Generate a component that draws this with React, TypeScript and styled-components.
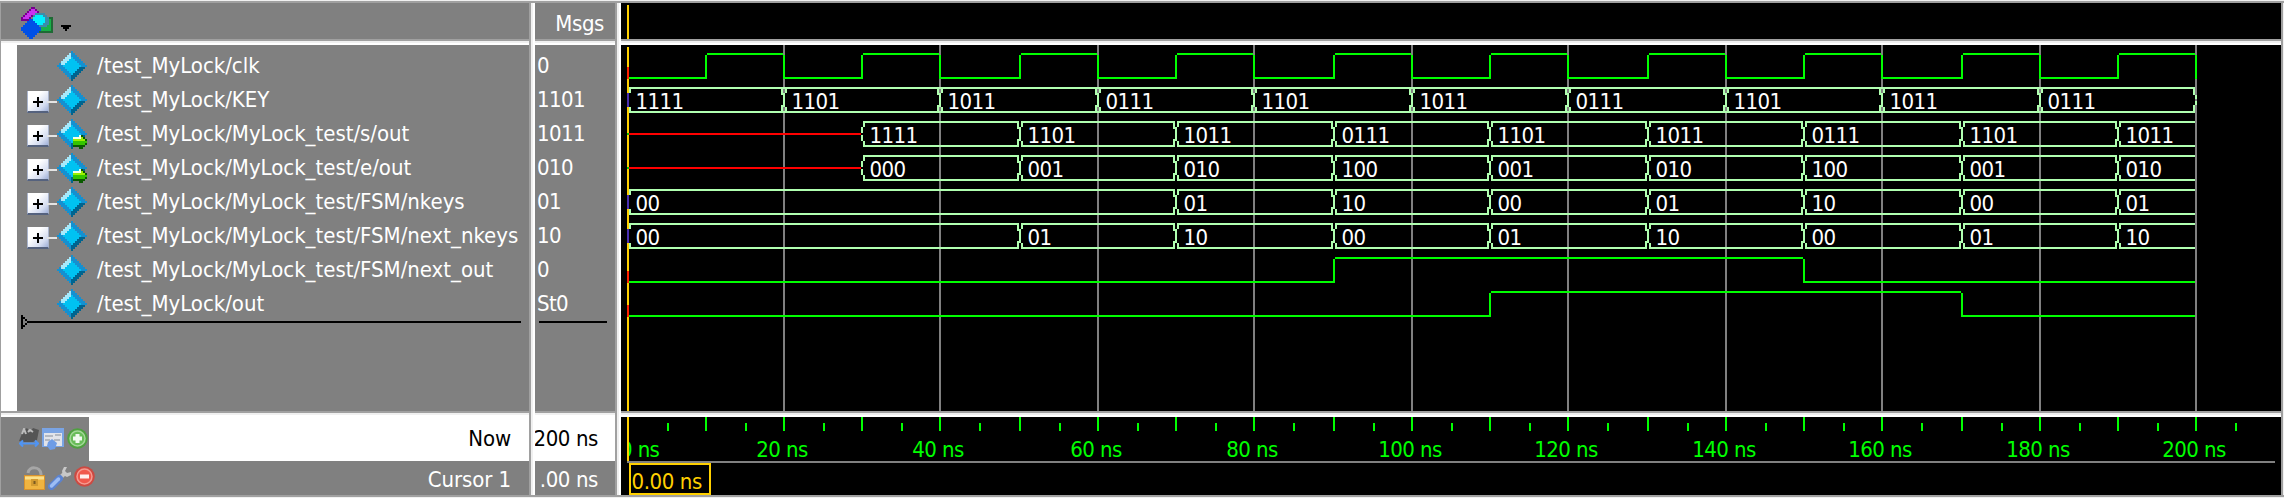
import React from "react";
import styled, { createGlobalStyle } from "styled-components";

const Global = createGlobalStyle`
  body { margin: 0; background: #f0f0f0; overflow: hidden; }
  * { box-sizing: border-box; }
  svg { display: block; flex: none; }
`;

const FONT = '"DejaVu Sans Condensed", "DejaVu Sans", sans-serif';
const GREY = "#808080";
const LIME = "#00ff00";
const MINT = "#b0ffb0";
const GOLD = "#ffd000";

const Window = styled.div`
  width: 2284px;
  height: 498px;
  display: flex;
  flex-direction: column;
  background: #f0f0f0;
  font-family: ${FONT};
  font-size: 22px;
  color: #fff;
  white-space: pre;
`;
const TopEdge = styled.div`
  height: 3px;
  border-bottom: 2px solid #a0a0a0;
`;
const BottomEdge = styled.div`
  height: 3px;
  border-top: 2px solid #a0a0a0;
`;
const Panes = styled.div`
  display: flex;
  height: 492px;
  border-left: 1px solid #a0a0a0;
  border-right: 1px solid #f0f0f0;
`;
const Pane = styled.div<{ $width: number; $bg?: string }>`
  width: ${(p) => p.$width}px;
  flex: none;
  display: flex;
  flex-direction: column;
  background: ${(p) => p.$bg ?? GREY};
  overflow: hidden;
`;
const VSash = styled.div`
  width: 6px;
  flex: none;
  background: linear-gradient(90deg, #a0a0a0 2px, #f0f0f0 2px 4px, #fff 4px);
`;
const HSash = styled.div`
  height: 6px;
  flex: none;
  background: linear-gradient(180deg, #a0a0a0 2px, #f0f0f0 2px 4px, #fff 4px);
`;
const RightEdge = styled.div`
  width: 2px;
  background: #a0a0a0;
`;
const Header = styled.div<{ $end?: boolean }>`
  height: 36px;
  flex: none;
  display: flex;
  justify-content: ${(p) => (p.$end ? "flex-end" : "flex-start")};
  padding: ${(p) => (p.$end ? "0 11px 0 0" : "4px 0 0 20px")};
  line-height: 41px;
`;
const HeaderLabel = styled.span`
  letter-spacing: -0.4px;
`;
const Caret = styled.svg`
  margin: 18px 0 0 8px;
`;
const Body = styled.div<{ $gutter?: boolean }>`
  height: 366px;
  flex: none;
  padding-top: 4px;
  border-left: ${(p) => (p.$gutter ? "16px solid #fff" : "0")};
`;
const SignalRow = styled.div`
  height: 34px;
  display: flex;
  align-items: center;
`;
const TreeSlot = styled.div`
  width: 40px;
  height: 34px;
  display: flex;
  align-items: center;
  padding: 4px 0 0 10px;
`;
const PlusBox = styled.div`
  width: 22px;
  height: 22px;
  flex: none;
  background: linear-gradient(135deg, #fff 35%, #d4dcf0 75%, #9fb0d8);
  border: solid #a9b4cc;
  border-width: 0 1px 2px 1px;
  border-bottom-color: #55627e;
`;
const Link = styled.div`
  width: 10px;
  height: 2px;
  background: #e4e4e4;
  margin-left: -2px;
`;
const SignalName = styled.span`
  margin-left: 8px;
  line-height: 34px;
  letter-spacing: -0.02px;
`;
const ValueRow = styled.div`
  height: 34px;
  line-height: 34px;
  padding-left: 2px;
  letter-spacing: -0.6px;
`;
const InsertBar = styled.div`
  display: flex;
  align-items: center;
  height: 14px;
  margin: -6px 0 0 4px;
`;
const InsertLine = styled.div<{ $width: number }>`
  width: ${(p) => p.$width}px;
  height: 2px;
  background: #000;
`;
const FootRow = styled.div<{ $h: number; $light?: boolean }>`
  height: ${(p) => p.$h}px;
  line-height: ${(p) => (p.$light ? p.$h : p.$h + 3)}px;
  flex: none;
  display: flex;
  justify-content: space-between;
  background: ${(p) => (p.$light ? "#fff" : GREY)};
  color: ${(p) => (p.$light ? "#000" : "#fff")};
  letter-spacing: -0.1px;
`;
const FootIcons = styled.div<{ $left: number; $top: number; $gap: number }>`
  width: 88px;
  height: 100%;
  background: ${GREY};
  padding: ${(p) => p.$top}px 0 0 ${(p) => p.$left}px;
  display: flex;
  gap: ${(p) => p.$gap}px;
`;
const FootLabel = styled.span`
  padding-right: 18px;
`;
const FootValue = styled.div<{ $h: number; $light?: boolean }>`
  height: ${(p) => p.$h}px;
  line-height: ${(p) => (p.$light ? p.$h : p.$h + 3)}px;
  flex: none;
  display: flex;
  justify-content: flex-end;
  padding-right: 17px;
  background: ${(p) => (p.$light ? "#fff" : GREY)};
  color: ${(p) => (p.$light ? "#000" : "#fff")};
  letter-spacing: -0.4px;
`;
const Plot = styled.svg`
  shape-rendering: crispEdges;
  font-family: ${FONT};
  font-size: 22px;
`;

/* ---------- icons ---------- */

const facet = (x: number, y: number) => {
  if (Math.abs(x) + Math.abs(y) <= 4) return "#00c2f2";
  if (x < 0 && y < 0) return Math.abs(x) + Math.abs(y) === 7 && x < -5 ? "#1590d0" : "#a6e9fb";
  if (x >= 0 && y > 0) return "#00648f";
  return "#1590d0";
};

const Diamond = ({ arrow }: { arrow?: boolean }) => {
  const cells: React.ReactNode[] = [];
  for (let y = -7; y <= 7; y++)
    for (let x = -7; x <= 7; x++)
      if (Math.abs(x) + Math.abs(y) <= 7)
        cells.push(<rect key={`${x},${y}`} x={x + 7} y={y + 7} width="1" height="1" fill={facet(x, y)} />);
  return (
    <svg width="32" height="30" viewBox="0 0 16 15" shapeRendering="crispEdges">
      {cells}
      {arrow && (
        <>
          <path d="M8 9h3v-1h2v1h1v1h1v3h-1v1h-1v1h-2v-1h-3z" fill="#0a5a00" />
          <path d="M8 9h3v-1h1v1h1v1h1v1h1v1h-7z" fill="#9af000" />
          <path d="M8 11h7v1h-1v1h-6z" fill="#35c400" />
          <path d="M8 9h3v-1h1v2h-4z" fill="#f4ffe8" />
        </>
      )}
    </svg>
  );
};

const Expand = () => (
  <>
    <PlusBox>
      <svg width="20" height="22" shapeRendering="crispEdges">
        <path d="M9 6h2v4h4v2h-4v4h-2v-4h-4v-2h4z" fill="#000" />
      </svg>
    </PlusBox>
    <Link />
  </>
);

const Logo = () => (
  <svg width="32" height="32" viewBox="0 0 16 16" shapeRendering="crispEdges">
    <rect x="9" y="5" width="7" height="8" fill="#1f6a35" />
    <rect x="9" y="6" width="6" height="6" fill="#18b048" />
    <path d="M5 0h2v1h1v1h1v3h-4v2h-5v-2h1v-1h1v-1h1v-1h1v-1h1z" fill="#76008c" />
    <path d="M5 1h2v1h1v2h-3v1h-1v1h-3v-1h1v-1h1v-1h1v-1h1z" fill="#c832f0" />
    <path d="M7 3h5v1h1v1h1v4h-1v1h-5v-2h-2v-4h1z" fill="#3c8ca8" />
    <path d="M7 4h4v1h1v3h-1v1h-4v-1h-1v-3h1z" fill="#00f0ff" />
    <path d="M4 6h2v1h1v1h1v1h1v1h1v2h-1v1h-1v1h-1v1h-1v1h-2v-1h-1v-1h-1v-1h-1v-1h-1v-2h1v-1h1v-1h1v-1h1z" fill="#0050e6" />
  </svg>
);

const CursorSpan = () => (
  <svg width="20" height="22" viewBox="0 0 20 22">
    <path d="M0 13 L4 3 L8 0 L11 4 L14 0 L20 2 L18 12 L14 14 L4 14z" fill="#555" />
    <path d="M3 6l2-5 2 5M9 4l2-2 3 2" stroke="#bdbdbd" strokeWidth="2" fill="none" />
    <path d="M2 15.500h16M4 12.500l-3 3 3 3M16 12.500l3 3-3 3" stroke="#4f94f4" strokeWidth="2" fill="none" />
  </svg>
);
const Note = () => (
  <svg width="22" height="22" viewBox="0 0 22 22">
    <rect width="22" height="19" fill="#7aa4e4" />
    <rect x="2" y="5" width="18" height="13" fill="#e2e4ea" />
    <path d="M3 8h8M13 7h6M3 12h5M12 12h6" stroke="#a4a9b4" strokeWidth="1.600" />
    <path d="M6 14l4-3 5 4-2 6-5 1-3-4z" fill="#6e9ce6" />
  </svg>
);
const Disc = ({ kind }: { kind: "add" | "remove" }) => (
  <svg width="21" height="21" viewBox="0 0 21 21">
    <circle cx="10.500" cy="10.500" r="10.300" fill={kind === "add" ? "#4fa040" : "#cc4a42"} />
    <circle cx="10.500" cy="10.500" r="7.500" fill={kind === "add" ? "#68bc58" : "#f0584c"} stroke={kind === "add" ? "#a4d898" : "#f59a90"} strokeWidth="1.500" />
    <path d={kind === "add" ? "M6 10.500h9M10.500 6v9" : "M6 10.500h9"} stroke="#fff" strokeOpacity="0.9" strokeWidth="4" />
  </svg>
);
const Lock = () => (
  <svg width="22" height="24" viewBox="0 0 22 24">
    <path d="M4 7c1-7 12-7 13 1v3" stroke="#a6a6a6" strokeWidth="3" fill="none" />
    <rect x="0.500" y="9.500" width="20" height="14" fill="#f0b440" stroke="#d8922c" />
    <path d="M1 12h19" stroke="#fbe08c" strokeWidth="3" />
    <rect x="7" y="13" width="7" height="7" fill="#d39a30" />
    <rect x="9.500" y="15" width="2" height="3" fill="#7c5a20" />
  </svg>
);
const Wrench = () => (
  <svg width="24" height="24" viewBox="0 0 24 24">
    <path d="M11 13l6-6" stroke="#c4c4c4" strokeWidth="4" />
    <path d="M16 1l-2 4 1 4 4 2 4-2v-3l-4 1-2-2 2-4z" fill="#c8c8c8" />
    <path d="M3.500 20.500l8-8" stroke="#5b83d0" strokeWidth="7" strokeLinecap="round" />
    <path d="M3.500 20l7-7" stroke="#9dbdf4" strokeWidth="3.500" strokeLinecap="round" />
  </svg>
);

/* ---------- waveform data ---------- */

/* Left pixel of every 10 ns mark, measured from the left side of the wave pane. */
const MARKS = [6, 84, 162, 240, 318, 398, 476, 554, 632, 712, 790, 868, 946, 1026, 1104, 1182, 1260, 1340, 1418, 1496, 1574];
const END = 20;

type Bus = { kind: "bus"; row: number; segs: [number, string][]; aligned?: boolean };
type Bit = { kind: "bit"; row: number; levels: [number, 0 | 1][] };

const KEYS = ["1111", "1101", "1011", "0111"];
const WAVES: (Bus | Bit)[] = [
  { kind: "bit", row: 0, levels: Array.from({ length: 21 }, (_, i) => [i, (i % 2) as 0 | 1]) },
  {
    kind: "bus", row: 1, aligned: true,
    segs: Array.from({ length: 10 }, (_, i) => [i * 2, i === 0 ? KEYS[0] : KEYS[((i - 1) % 3) + 1]]),
  },
  { kind: "bus", row: 2, segs: [[3, "1111"], [5, "1101"], [7, "1011"], [9, "0111"], [11, "1101"], [13, "1011"], [15, "0111"], [17, "1101"], [19, "1011"]] },
  { kind: "bus", row: 3, segs: [[3, "000"], [5, "001"], [7, "010"], [9, "100"], [11, "001"], [13, "010"], [15, "100"], [17, "001"], [19, "010"]] },
  { kind: "bus", row: 4, segs: [[0, "00"], [7, "01"], [9, "10"], [11, "00"], [13, "01"], [15, "10"], [17, "00"], [19, "01"]] },
  { kind: "bus", row: 5, segs: [[0, "00"], [5, "01"], [7, "10"], [9, "00"], [11, "01"], [13, "10"], [15, "00"], [17, "01"], [19, "10"]] },
  { kind: "bit", row: 6, levels: [[0, 0], [9, 1], [15, 0]] },
  { kind: "bit", row: 7, levels: [[0, 0], [11, 1], [17, 0]] },
];

const BitWave = ({ row, levels }: Bit) => {
  const top = 8 + row * 34;
  return (
    <g fill={LIME}>
      {levels.map(([t, v], i) => {
        const x = MARKS[t];
        const stop = MARKS[levels[i + 1]?.[0] ?? END];
        const from = v ? x + 2 : x;
        return (
          <React.Fragment key={t}>
            {i > 0 && <rect x={x} y={top + 2} width="2" height="24" />}
            {stop > from && <rect x={from} y={v ? top : top + 24} width={stop - from} height="2" />}
          </React.Fragment>
        );
      })}
    </g>
  );
};

const BusWave = ({ row, segs, aligned }: Bus) => {
  const top = 8 + row * 34;
  const gap = aligned ? 0 : 2;
  return (
    <g fill={MINT}>
      {segs[0][0] > 0 && <rect x="8" y={top + 12} width={MARKS[segs[0][0]] - 8} height="2" fill="#ff0000" />}
      {segs.map(([t, label], i) => {
        const x = MARKS[t];
        const last = i === segs.length - 1;
        const stop = MARKS[last ? END : segs[i + 1][0]];
        return (
          <React.Fragment key={t}>
            <rect x={x + gap} y={top} width={stop - x - gap} height="2" />
            <rect x={x + gap} y={top + 24} width={stop - x - gap} height="2" />
            <rect x={x + 2} y={top} width="2" height="6" />
            <rect x={x + 2} y={top + 20} width="2" height="6" />
            {i === 0 ? (
              <path d={`M${x} ${top + 6}h2v6h-2zM${x} ${top + 14}h2v6h-2z`} />
            ) : (
              <rect x={x} y={top + 6} width="2" height="14" />
            )}
            {(!last || aligned) && (
              <path d={`M${stop - 2} ${top}h2v8h-2zM${stop - 2} ${top + 18}h2v8h-2z`} />
            )}
            {last && aligned && <path d={`M${stop} ${top + 8}h2v4h-2zM${stop} ${top + 14}h2v4h-2z`} />}
            <text x={x + 8.5} y={top + 22} fill="#fff" letterSpacing="-0.6">{label}</text>
          </React.Fragment>
        );
      })}
    </g>
  );
};

const WavePlot = () => (
  <Plot width="1660" height="366">
    {MARKS.map((x, i) => i > 0 && i % 2 === 0 && <rect key={x} x={x} y="0" width="2" height="366" fill={GREY} />)}
    {WAVES.map((w) => (w.kind === "bit" ? <BitWave key={w.row} {...w} /> : <BusWave key={w.row} {...w} />))}
    <rect x="6" y="2" width="2" height="364" fill={GOLD} />
    {[0, 6, 7].map((r) => <rect key={r} x="6" y={22 + r * 34} width="2" height="12" fill="#ff2000" />)}
    {[1, 4, 5].map((r) => <rect key={r} x="6" y={14 + r * 34} width="2" height="14" fill="#4a2fb0" />)}
    {[2, 3].map((r) => <rect key={r} x="6" y={20 + r * 34} width="2" height="2" fill="#00c800" />)}
  </Plot>
);

const Ruler = () => (
  <Plot width="1660" height="78">
    <clipPath id="ruler-clip"><rect x="6" y="0" width="1650" height="44" /></clipPath>
    <g fill={LIME} clipPath="url(#ruler-clip)">
      {MARKS.map((x, i) => (
        <React.Fragment key={x}>
          {i > 0 && <rect x={x} y="0" width="2" height="14" />}
          <rect x={x + 40} y="6" width="2" height="8" />
          {i % 2 === 0 && (
            <text x={i ? x - 1 : -1} y="40" textAnchor={i ? "middle" : "start"} letterSpacing="-0.6">{`${i * 10} ns`}</text>
          )}
        </React.Fragment>
      ))}
    </g>
    <rect x="6" y="44" width="1648" height="2" fill={GREY} />
    <rect x="6" y="0" width="2" height="44" fill={GOLD} />
    <rect x="9" y="47" width="80" height="30" fill="#000" stroke={GOLD} strokeWidth="2" />
    <text x="10.500" y="72" fill={GOLD} letterSpacing="-0.4">0.00 ns</text>
  </Plot>
);

const SIGNALS = [
  { name: "/test_MyLock/clk", value: "0" },
  { name: "/test_MyLock/KEY", value: "1101", expand: true },
  { name: "/test_MyLock/MyLock_test/s/out", value: "1011", expand: true, arrow: true },
  { name: "/test_MyLock/MyLock_test/e/out", value: "010", expand: true, arrow: true },
  { name: "/test_MyLock/MyLock_test/FSM/nkeys", value: "01", expand: true },
  { name: "/test_MyLock/MyLock_test/FSM/next_nkeys", value: "10", expand: true },
  { name: "/test_MyLock/MyLock_test/FSM/next_out", value: "0" },
  { name: "/test_MyLock/out", value: "St0" },
];

export default function App() {
  return (
    <Window>
      <Global />
      <TopEdge />
      <Panes>
        <Pane $width={528}>
          <Header>
            <Logo />
            <Caret width="10" height="6" viewBox="0 0 10 6" shapeRendering="crispEdges">
              <path d="M0 0h10v2h-2v2h-2v2h-2v-2h-2v-2h-2z" fill="#000" />
            </Caret>
          </Header>
          <HSash />
          <Body $gutter>
            {SIGNALS.map((s) => (
              <SignalRow key={s.name}>
                <TreeSlot>{s.expand && <Expand />}</TreeSlot>
                <Diamond arrow={s.arrow} />
                <SignalName>{s.name}</SignalName>
              </SignalRow>
            ))}
            <InsertBar>
              <svg width="6" height="14" shapeRendering="crispEdges">
                <path d="M0 0h2v2h2v2h-2v6h2v2h-2v2h-2zM4 4h2v2h-2zM4 8h2v2h-2z" fill="#000" />
              </svg>
              <InsertLine $width={494} />
            </InsertBar>
          </Body>
          <HSash />
          <FootRow $h={44} $light>
            <FootIcons $left={18} $top={11} $gap={3}>
              <CursorSpan />
              <Note />
              <Disc kind="add" />
            </FootIcons>
            <FootLabel>Now</FootLabel>
          </FootRow>
          <FootRow $h={34}>
            <FootIcons $left={23} $top={5} $gap={2}>
              <Lock />
              <Wrench />
              <Disc kind="remove" />
            </FootIcons>
            <FootLabel>Cursor 1</FootLabel>
          </FootRow>
        </Pane>
        <VSash />
        <Pane $width={80}>
          <Header $end>
            <HeaderLabel>Msgs</HeaderLabel>
          </Header>
          <HSash />
          <Body>
            {SIGNALS.map((s) => (
              <ValueRow key={s.name}>{s.value}</ValueRow>
            ))}
            <InsertBar>
              <InsertLine $width={68} />
            </InsertBar>
          </Body>
          <HSash />
          <FootValue $h={44} $light>200 ns</FootValue>
          <FootValue $h={34}>.00 ns</FootValue>
        </Pane>
        <VSash />
        <Pane $width={1660} $bg="#000">
          <Plot width="1660" height="36">
            <rect x="6" y="2" width="2" height="34" fill={GOLD} />
          </Plot>
          <HSash />
          <WavePlot />
          <HSash />
          <Ruler />
        </Pane>
        <RightEdge />
      </Panes>
      <BottomEdge />
    </Window>
  );
}
